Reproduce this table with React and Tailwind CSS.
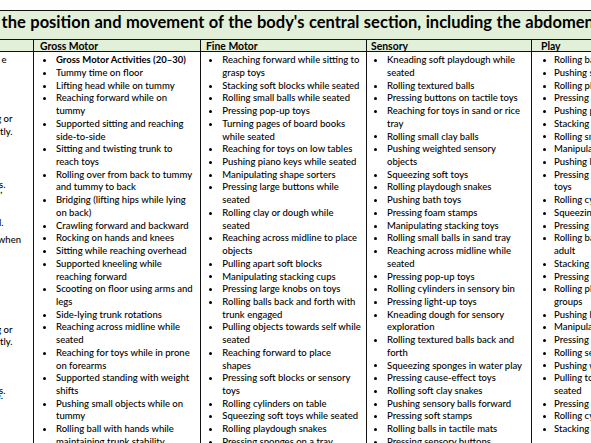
import React from 'react';

const leftBits = [
  { text: '\u00a0e', cls: 'w-[6.5px] mt-0' },
  { text: 'sitting or', cls: 'w-[12.5px] mt-[46px]' },
  { text: 'efficiently.', cls: 'w-[12.5px] mt-0' },
  { text: 'toys.', cls: 'w-[5.5px] mt-[40.6px]' },
  { text: 'sitting,', cls: 'w-[2.5px] mt-[-7.7px]' },
  { text: 'control.', cls: 'w-[3.5px] mt-[20px]' },
  { text: 'balance when', cls: 'w-[21px] mt-[4.6px]' },
  { text: 'sitting or', cls: 'w-[12.5px] mt-[76.7px]' },
  { text: 'efficiently.', cls: 'w-[12.5px] mt-0' },
  { text: 'toys.', cls: 'w-[5.5px] mt-[35.6px]' },
  { text: 'posture.', cls: 'w-[3px] mt-[-7.7px]' },
];

const gross = [
  ['Gross Motor Activities (20–30)'],
  ['Tummy time on floor'],
  ['Lifting head while on tummy'],
  ['Reaching forward while on', 'tummy'],
  ['Supported sitting and reaching', 'side-to-side'],
  ['Sitting and twisting trunk to', 'reach toys'],
  ['Rolling over from back to tummy', 'and tummy to back'],
  ['Bridging (lifting hips while lying', 'on back)'],
  ['Crawling forward and backward'],
  ['Rocking on hands and knees'],
  ['Sitting while reaching overhead'],
  ['Supported kneeling while', 'reaching forward'],
  ['Scooting on floor using arms and', 'legs'],
  ['Side-lying trunk rotations'],
  ['Reaching across midline while', 'seated'],
  ['Reaching for toys while in prone', 'on forearms'],
  ['Supported standing with weight', 'shifts'],
  ['Pushing small objects while on', 'tummy'],
  ['Rolling ball with hands while', 'maintaining trunk stability'],
];

const fine = [
  ['Reaching forward while sitting to', 'grasp toys'],
  ['Stacking soft blocks while seated'],
  ['Rolling small balls while seated'],
  ['Pressing pop-up toys'],
  ['Turning pages of board books', 'while seated'],
  ['Reaching for toys on low tables'],
  ['Pushing piano keys while seated'],
  ['Manipulating shape sorters'],
  ['Pressing large buttons while', 'seated'],
  ['Rolling clay or dough while', 'seated'],
  ['Reaching across midline to place', 'objects'],
  ['Pulling apart soft blocks'],
  ['Manipulating stacking cups'],
  ['Pressing large knobs on toys'],
  ['Rolling balls back and forth with', 'trunk engaged'],
  ['Pulling objects towards self while', 'seated'],
  ['Reaching forward to place', 'shapes'],
  ['Pressing soft blocks or sensory', 'toys'],
  ['Rolling cylinders on table'],
  ['Squeezing soft toys while seated'],
  ['Rolling playdough snakes'],
  ['Pressing sponges on a tray'],
];

const sensory = [
  ['Kneading soft playdough while', 'seated'],
  ['Rolling textured balls'],
  ['Pressing buttons on tactile toys'],
  ['Reaching for toys in sand or rice', 'tray'],
  ['Rolling small clay balls'],
  ['Pushing weighted sensory', 'objects'],
  ['Squeezing soft toys'],
  ['Rolling playdough snakes'],
  ['Pushing bath toys'],
  ['Pressing foam stamps'],
  ['Manipulating stacking toys'],
  ['Rolling small balls in sand tray'],
  ['Reaching across midline while', 'seated'],
  ['Pressing pop-up toys'],
  ['Rolling cylinders in sensory bin'],
  ['Pressing light-up toys'],
  ['Kneading dough for sensory', 'exploration'],
  ['Rolling textured balls back and', 'forth'],
  ['Squeezing sponges in water play'],
  ['Pressing cause-effect toys'],
  ['Rolling soft clay snakes'],
  ['Pushing sensory balls forward'],
  ['Pressing soft stamps'],
  ['Rolling balls in tactile mats'],
  ['Pressing sensory buttons'],
];

const play = [
  ['Rolling balls to a partner'],
  ['Pushing soft toy cars'],
  ['Rolling playdough together'],
  ['Pressing musical toys'],
  ['Pushing pull-along toys'],
  ['Stacking cups with a friend'],
  ['Rolling small cars on mats'],
  ['Manipulating puzzles'],
  ['Pushing large balls'],
  ['Pressing buttons on interactive', 'toys'],
  ['Rolling cylinders in play'],
  ['Squeezing bath toys'],
  ['Pressing sound books'],
  ['Rolling balls back and forth with', 'adult'],
  ['Stacking blocks in turns'],
  ['Pressing pop-up toys'],
  ['Rolling playdough in small', 'groups'],
  ['Pushing baby strollers'],
  ['Manipulating toy kitchens'],
  ['Pressing toy phones'],
  ['Rolling sensory balls'],
  ['Pushing wheeled toys'],
  ['Pulling toys on strings while', 'seated'],
  ['Pressing shape stamps'],
  ['Rolling cylinders together'],
  ['Stacking rings'],
];

function Item({ lines, bold, pad }) {
  return (
    <div className="flex">
      <div className={`${pad} shrink-0 h-[12.73px] flex items-center`}>
        <span className="block w-[3px] h-[3px] rounded-full bg-black" />
      </div>
      <div className={bold ? 'font-bold' : ''}>
        {lines.map((l, i) => (
          <div key={i} className="whitespace-nowrap h-[12.73px]">
            {l}
          </div>
        ))}
      </div>
    </div>
  );
}

function Column({ items, cellPad, bulletPad, boldFirst, last }) {
  return (
    <div className={`${cellPad} pt-[2.3px] ${last ? '' : 'border-r border-[#111]'} overflow-hidden`}>
      {items.map((lines, i) => (
        <Item key={i} lines={lines} bold={boldFirst && i === 0} pad={bulletPad} />
      ))}
    </div>
  );
}

export default function App() {
  return (
    <div className="w-[591px] h-[443px] overflow-hidden bg-white text-black font-[Lato,sans-serif] pt-[9.5px]">
      <div className="w-[900px] border-t border-[#111]">
        <div className="h-[28.5px] bg-[#e2efd9] pt-[2px] pl-[1.5px] text-[16.5px] leading-[19.2px] font-bold whitespace-nowrap [word-spacing:0.5px]">
          the position and movement of the body's central section, including the abdomen, back and pelvis
        </div>
        <div className="grid grid-cols-[34px_167px_166px_165px_368px] border-t border-b border-[#111] bg-[#e2efd9] text-[10.4px] font-bold leading-[11px]">
          <div className="h-[11px] border-r border-[#111]" />
          <div className="h-[11px] pl-[6px] pt-px border-r border-[#111]">Gross Motor</div>
          <div className="h-[11px] pl-[5px] pt-px border-r border-[#111]">Fine Motor</div>
          <div className="h-[11px] pl-[4px] pt-px border-r border-[#111]">Sensory</div>
          <div className="h-[11px] pl-[9px] pt-px">Play</div>
        </div>
        <div className="grid grid-cols-[34px_167px_166px_165px_368px] text-[9.5px] font-medium leading-[12.73px] h-[400px]">
          <div className="pt-[2.3px] border-r border-[#111] overflow-hidden">
            {leftBits.map((b, i) => (
              <div key={i} className={`${b.cls} h-[12.73px] flex justify-end whitespace-nowrap`}>
                <span>{b.text}</span>
              </div>
            ))}
          </div>
          <Column items={gross} cellPad="pl-[9px]" bulletPad="w-[13px]" boldFirst />
          <Column items={fine} cellPad="pl-[8px]" bulletPad="w-[13.3px]" />
          <Column items={sensory} cellPad="pl-[7px]" bulletPad="w-[13px]" />
          <Column items={play} cellPad="pl-[10.5px]" bulletPad="w-[11.5px]" last />
        </div>
      </div>
    </div>
  );
}
